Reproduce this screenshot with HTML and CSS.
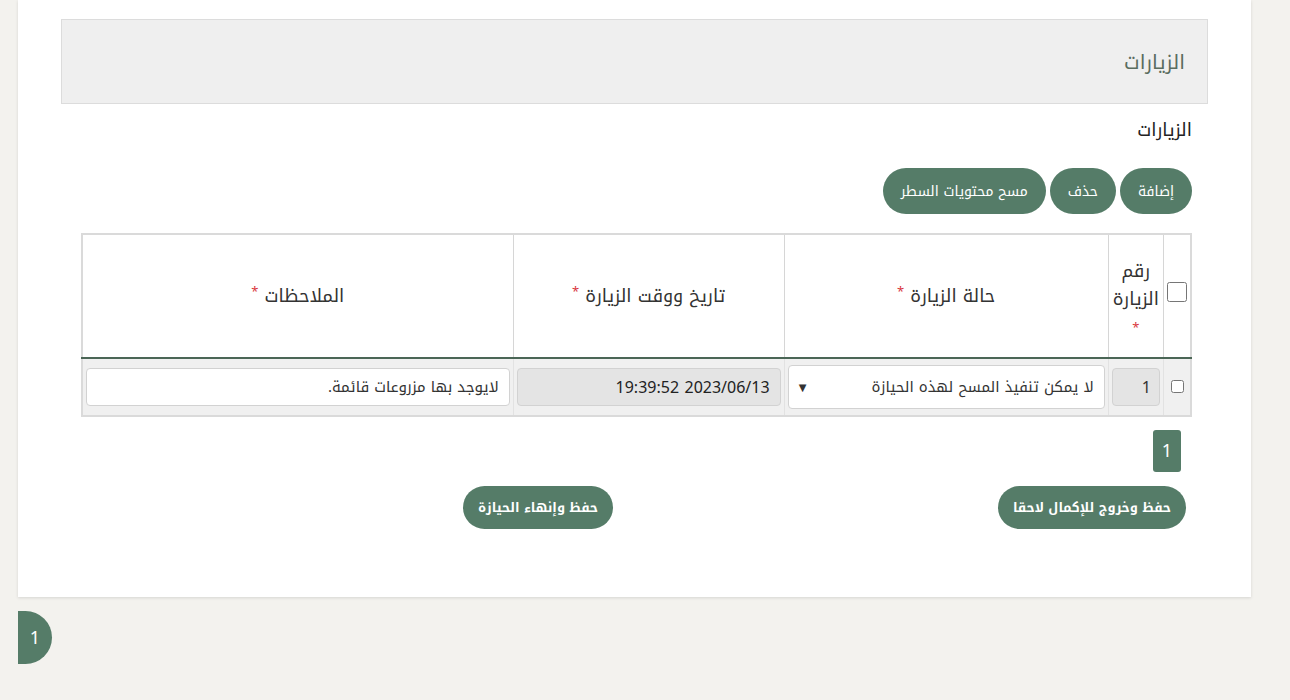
FILE: index.html
```html
<!DOCTYPE html>
<html lang="ar" dir="rtl">
<head>
  <meta charset="UTF-8" />
  <meta name="viewport" content="width=device-width, initial-scale=1.0"/>
  <title>الزيارات</title>
  <link rel="stylesheet" href="styles.css">
</head>
<body>

  <div class="card">
    <div class="panel-head">
      <h3>الزيارات</h3>
    </div>

    <div class="panel-body">
      <h4 class="section-title">الزيارات</h4>

      <div class="toolbar">
        <button class="btn">إضافة</button>
        <button class="btn">حذف</button>
        <button class="btn">مسح محتويات السطر</button>
      </div>

      <table class="grid">
        <thead>
          <tr>
            <th class="col-check"><input type="checkbox" class="big-check"></th>
            <th class="col-num">رقم الزيارة <span class="req req-line">*</span></th>
            <th class="col-status">حالة الزيارة <span class="req">*</span></th>
            <th class="col-date">تاريخ ووقت الزيارة <span class="req">*</span></th>
            <th>الملاحظات <span class="req">*</span></th>
          </tr>
        </thead>
        <tbody>
          <tr>
            <td class="col-check"><input type="checkbox" class="small-check"></td>
            <td><div class="field readonly num">1</div></td>
            <td><div class="field select"><span>لا يمكن تنفيذ المسح لهذه الحيازة</span><span class="caret">▼</span></div></td>
            <td><div class="field readonly date">2023/06/13 19:39:52</div></td>
            <td><div class="field">لايوجد بها مزروعات قائمة.</div></td>
          </tr>
        </tbody>
      </table>

      <div class="pager"><span class="page">1</span></div>

      <div class="actions">
        <button class="btn btn-wide">حفظ وخروج للإكمال لاحقا</button>
        <button class="btn btn-wide">حفظ وإنهاء الحيازة</button>
      </div>
    </div>
  </div>

  <div class="side-badge">1</div>

</body>
</html>
```

FILE: styles.css
```css
body {
  margin: 0;
  background: #f3f2ee;
  font-family: "Noto Kufi Arabic", "Noto Sans Arabic", "DejaVu Sans", sans-serif;
  color: #333;
}

.card {
  margin-left: 18px;
  margin-right: auto;
  width: 1233px;
  height: 597px;
  box-sizing: border-box;
  background: #fff;
  padding: 19px 43px 0 43px;
  box-shadow: 0 1px 3px rgba(0, 0, 0, 0.12);
}

.panel-head {
  height: 85px;
  box-sizing: border-box;
  background: #efefef;
  border: 1px solid #dcdcdc;
  display: flex;
  align-items: center;
  padding-right: 22px;
}

.panel-head h3 {
  margin: 0;
  font-size: 20px;
  font-weight: normal;
  color: #5a6d5f;
}

.panel-body {
  padding: 0 16px 0 16px;
}

.section-title {
  margin: 14px 0 0 0;
  font-size: 18px;
  font-weight: normal;
  color: #222;
  line-height: 24px;
}

.toolbar {
  display: flex;
  gap: 4px;
  margin-top: 26px;
}

.btn {
  font-family: inherit;
  background: #557c68;
  color: #fff;
  border: none;
  border-radius: 23px;
  height: 46px;
  padding: 0 18px;
  font-size: 14px;
  cursor: pointer;
}

.grid {
  width: 1111px;
  margin-top: 19px;
  border-collapse: collapse;
  border: 2px solid #dadada;
}

.grid th {
  height: 122px;
  font-weight: normal;
  font-size: 18px;
  color: #333;
  border-left: 1px solid #d6d6d6;
  border-bottom: 2px solid #4b6656;
  text-align: center;
  padding: 0 4px;
}

.grid th:last-child {
  border-left: none;
}

.req {
  color: #d9363e;
  font-size: 13px;
  vertical-align: top;
}

.req-line {
  display: block;
  line-height: 14px;
  margin-top: 8px;
}

.grid .col-check {
  width: 26px;
  padding: 0;
}

.col-num { width: 46px; line-height: 28px; }
.col-status { width: 315px; }
.col-date { width: 262px; }

.big-check {
  width: 20px;
  height: 20px;
  margin: 0;
}

.small-check {
  width: 13px;
  height: 13px;
  margin: 0;
}

.grid td {
  background: #f0f0f0;
  height: 56px;
  padding: 0 3px;
  border-left: 1px solid #e2e2e2;
  text-align: center;
}

.grid td:last-child {
  border-left: none;
}

.field {
  height: 38px;
  box-sizing: border-box;
  border: 1px solid #d2d2d2;
  border-radius: 4px;
  background: #fff;
  display: flex;
  align-items: center;
  padding: 0 10px;
  font-size: 15px;
  color: #333;
  white-space: nowrap;
}

.field.readonly {
  background: #e4e4e4;
}

.field.num {
  font-size: 16px;
  padding: 0 8px;
}

.field.date {
  font-size: 16px;
  color: #222;
}

.field.select {
  justify-content: space-between;
  height: 44px;
}

.caret {
  font-size: 10px;
  color: #333;
}

.pager {
  display: flex;
  padding-right: 11px;
  margin-top: 13px;
}

.page {
  width: 28px;
  height: 42px;
  background: #557c68;
  color: #fff;
  border-radius: 3px;
  display: flex;
  align-items: center;
  justify-content: center;
  font-size: 18px;
}

.actions {
  display: flex;
  gap: 385px;
  padding-right: 6px;
  margin-top: 14px;
}

.btn-wide {
  height: 43px;
  border-radius: 22px;
  font-weight: bold;
  font-size: 13px;
  padding: 0 15px;
}

.side-badge {
  margin-top: 14px;
  margin-left: 18px;
  margin-right: auto;
  width: 34px;
  height: 53px;
  background: #557c68;
  color: #fff;
  border-radius: 0 27px 27px 0;
  display: flex;
  align-items: center;
  justify-content: center;
  font-size: 18px;
}
```
